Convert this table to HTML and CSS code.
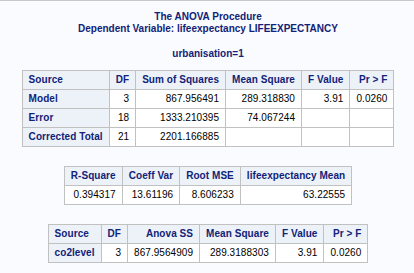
FILE: index.html
```html
<!DOCTYPE html>
<html>
<head>
<meta charset="utf-8">
<link rel="stylesheet" href="styles.css">
</head>
<body>
<div class="page">
  <div class="titles">
    <p class="title">The ANOVA Procedure</p>
    <p class="title">Dependent Variable: lifeexpectancy LIFEEXPECTANCY</p>
    <p class="byline">urbanisation=1</p>
  </div>
  <table class="grid">
    <tr><th class="l">Source</th><th>DF</th><th>Sum of Squares</th><th>Mean Square</th><th>F Value</th><th>Pr &gt; F</th></tr>
    <tr><th class="l">Model</th><td>3</td><td>867.956491</td><td>289.318830</td><td>3.91</td><td>0.0260</td></tr>
    <tr><th class="l">Error</th><td>18</td><td>1333.210395</td><td>74.067244</td><td></td><td></td></tr>
    <tr><th class="l">Corrected Total</th><td>21</td><td>2201.166885</td><td></td><td></td><td></td></tr>
  </table>
  <table class="grid">
    <tr><th>R-Square</th><th>Coeff Var</th><th>Root MSE</th><th>lifeexpectancy Mean</th></tr>
    <tr><td>0.394317</td><td>13.61196</td><td>8.606233</td><td>63.22555</td></tr>
  </table>
  <table class="grid">
    <tr><th class="l">Source</th><th>DF</th><th>Anova SS</th><th>Mean Square</th><th>F Value</th><th>Pr &gt; F</th></tr>
    <tr><th class="l">co2level</th><td>3</td><td>867.9564909</td><td>289.3188303</td><td>3.91</td><td>0.0260</td></tr>
  </table>
</div>
</body>
</html>
```
FILE: styles.css
```css
html, body {
  margin: 0;
  background: #fafbfe;
}
body {
  border-top: 1px solid #c8c8c8;
  font-family: "Liberation Sans", Arial, sans-serif;
  font-size: 10px;
  line-height: 12px;
  color: #112277;
}
.page {
  padding: 10px 7px 0 9px;
}
.titles {
  text-align: center;
  font-weight: bold;
  margin-bottom: 10px;
}
.title {
  margin: 0;
}
.byline {
  margin: 13px 0 0;
}
.grid {
  border-collapse: collapse;
  margin: 0 auto 19px;
}
.grid th, .grid td {
  border: 1px solid #c1c1c1;
  padding: 3px 6px;
  line-height: 12px;
  font-size: 10px;
  letter-spacing: 0.06px;
  white-space: nowrap;
  text-align: right;
}
.grid th {
  background: #edf2f9;
  color: #112277;
  font-weight: bold;
}
.grid th.l {
  text-align: left;
}
.grid td {
  background: #ffffff;
  color: #000000;
}
```
